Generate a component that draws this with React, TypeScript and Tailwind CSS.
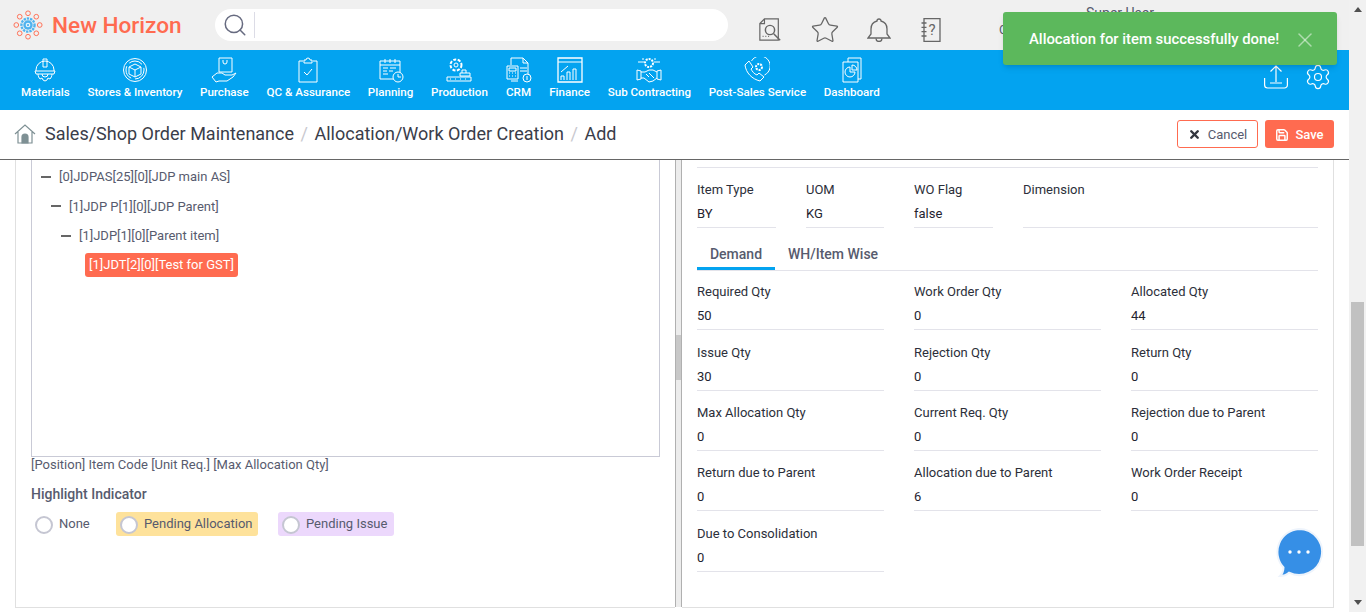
import { Star, Search, X, Save, Settings } from 'lucide-react'

const menu = [
  { label: 'Materials', icon: 'helmet' },
  { label: 'Stores & Inventory', icon: 'box' },
  { label: 'Purchase', icon: 'purchase' },
  { label: 'QC & Assurance', icon: 'qc' },
  { label: 'Planning', icon: 'plan' },
  { label: 'Production', icon: 'prod' },
  { label: 'CRM', icon: 'crm' },
  { label: 'Finance', icon: 'finance' },
  { label: 'Sub Contracting', icon: 'sub' },
  { label: 'Post-Sales Service', icon: 'post' },
  { label: 'Dashboard', icon: 'dash' },
]

function MenuIcon({ name }: { name: string }) {
  const p = { fill: 'none', stroke: 'white', strokeWidth: 1 }
  return (
    <svg width="26" height="26" viewBox="0 0 26 26" {...p}>
      {name === 'helmet' && (
        <>
          <path d="M4 13a9 9 0 0 1 18 0v1M4 13v1" />
          <path d="M3 14h20l-1 3H4z" />
          <path d="M11 2h4v8h-4z" />
          <path d="M6 17c0 2 1 4 2 5l2-1 1 2 2 1 2-1 1-2 2 1c1-1 2-3 2-5M10 17a3 3 0 0 0 6 0" />
        </>
      )}
      {name === 'box' && (
        <>
          <circle cx="13" cy="13" r="11.5" />
          <circle cx="13" cy="13" r="9" strokeDasharray="14 4" />
          <path d="M7 10l6-3 6 3v7l-6 3-6-3zM7 10l6 3 6-3M13 13v7" />
        </>
      )}
      {name === 'purchase' && (
        <>
          <path d="M8 1h13v14H8zM12 3v2a2 2 0 0 0 4 0V3" />
          <path d="M1 20l5-4h5l3 2h7l4-2-3 4-6 4H8l-3 1z" />
        </>
      )}
      {name === 'qc' && (
        <>
          <path d="M8 4H4v21h18V4h-4M9 6V3h2a2 2 0 0 1 4 0h2v3z" />
          <path d="M9 15l3 3 5-6" />
        </>
      )}
      {name === 'plan' && (
        <>
          <path d="M2 4h20v18H2zM2 8h20M7 2v4M12 2v4M17 2v4M5 11h5M12 11h6M5 14h4M11 14h4M5 17h5" />
          <circle cx="20" cy="20" r="5" fill="#03a3f0" />
          <path d="M20 17v3h3" />
        </>
      )}
      {name === 'prod' && (
        <>
          <circle cx="10" cy="8" r="5.5" strokeDasharray="3 1.500" strokeWidth="2" />
          <circle cx="10" cy="8" r="2" />
          <path d="M16 16v-3h4v3M14 16h10v3H14zM1 20h24v4H1z" />
          <path d="M4 22h1M9 22h1M14 22h1M19 22h1" />
        </>
      )}
      {name === 'crm' && (
        <>
          <path d="M5 8V1h12l5 5v13h-4M17 1v5h5M12 24H5" />
          <path d="M1 9h11v13H1zM3 11h7v3H3zM3 16h1M6 16h1M9 16h1M3 19h1M6 19h1M9 19h1M14 11h7M14 14h7" />
          <circle cx="21" cy="21" r="4" fill="#03a3f0" />
          <path d="M21 19v4" />
        </>
      )}
      {name === 'finance' && (
        <>
          <path d="M1 1h24v24H1z" strokeWidth="1.300" />
          <path d="M1 5h24" />
          <path d="M4 23v-4h3v4M10 23v-8h3v8M16 23v-11h3v11M4 15l7-6" />
        </>
      )}
      {name === 'sub' && (
        <>
          <circle cx="13" cy="6" r="4" strokeDasharray="2 1" strokeWidth="2" />
          <path d="M2 5h6M18 5h6M6 2h2M18 2h2" />
          <path d="M1 13l4 1v8l-4 1zM25 13l-4 1v8l4 1z" />
          <path d="M5 15h4l4-2h4l4 2M5 21h3l5 4 4-1 4-3M10 17l3 3M13 16l5 5" />
        </>
      )}
      {name === 'post' && (
        <>
          <path d="M7.500 4a10 10 0 1 1 13 14" />
          <path d="M5 4L1 8c1 8 7 14 15 16l4-4-5-4-2 2c-3-1-5-4-6-6l2-2z" />
          <circle cx="15" cy="10" r="3" strokeDasharray="2 1" strokeWidth="2" />
        </>
      )}
      {name === 'dash' && (
        <>
          <path d="M9 5V1h13v21h-3M4 5h15v20H4z" />
          <path d="M11 10a5 5 0 1 0 5 5h-5zM13 8v5h5a5 5 0 0 0-5-5z" />
        </>
      )}
    </svg>
  )
}

function Logo() {
  const dots = [0, 45, 90, 135, 180, 225, 270, 315]
  return (
    <svg width="30" height="30" viewBox="0 0 32 32">
      {dots.map((a) => (
        <circle
          key={a}
          cx={16 + 12.5 * Math.cos((a * Math.PI) / 180)}
          cy={16 + 12.5 * Math.sin((a * Math.PI) / 180)}
          r="2.500"
          fill="#f0f0f0"
          stroke="#ff6b50"
          strokeWidth="1"
        />
      ))}
      <circle cx="16" cy="16" r="7" fill="none" stroke="#4fb3ef" strokeWidth="2.500" strokeDasharray="2.500 1" />
      <circle cx="16" cy="16" r="5" fill="#4fb3ef" />
      <circle cx="16" cy="16" r="2.500" fill="#e8f4fc" />
      <circle cx="16" cy="16" r="1.200" fill="#4fb3ef" />
    </svg>
  )
}

function Field({ label, value }: { label: string; value?: string }) {
  return (
    <div>
      <div className="h-[24px] text-[13px] leading-[26px] text-[#2c2f3a]">{label}</div>
      <div className="h-[27px] border-b border-[#e3e3ea] text-[13px] leading-[26px] text-[#1f2430]">{value}</div>
    </div>
  )
}

const qtyFields = [
  ['Required Qty', '50'],
  ['Work Order Qty', '0'],
  ['Allocated Qty', '44'],
  ['Issue Qty', '30'],
  ['Rejection Qty', '0'],
  ['Return Qty', '0'],
  ['Max Allocation Qty', '0'],
  ['Current Req. Qty', '0'],
  ['Rejection due to Parent', '0'],
  ['Return due to Parent', '0'],
  ['Allocation due to Parent', '6'],
  ['Work Order Receipt', '0'],
  ['Due to Consolidation', '0'],
]

function Radio({ label, className }: { label: string; className: string }) {
  return (
    <div className={`flex h-[24px] items-center gap-[6px] rounded-[3px] pl-[4px] ${className}`}>
      <span className="mt-[2px] h-[18px] w-[18px] shrink-0 rounded-full border-2 border-[#c5c6d2] bg-white" />
      <span className="text-[13px] text-[#575b6e]">{label}</span>
    </div>
  )
}

export default function App() {
  return (
    <div className="relative flex h-[612px] w-[1366px] overflow-hidden bg-white font-['Roboto',sans-serif]">
      <div className="flex w-[1349px] flex-col">
        <header className="flex h-[50px] items-center bg-[#f0f0f0]">
          <div className="ml-[13px] flex w-[202px] items-center gap-[9px]">
            <Logo />
            <span className="mt-[2px] text-[22.6px] font-medium text-[#ff6b50]">New Horizon</span>
          </div>
          <div className="flex h-[32px] w-[513px] items-center rounded-full bg-white pl-[7px]">
            <Search size={26} strokeWidth={1.4} className="text-[#676b80]" />
            <span className="ml-[6px] h-[26px] w-px bg-[#dcdce6]" />
          </div>
          <div className="ml-[30px] mt-[10px] flex items-center text-[#666666]">
            <svg width="24" height="24" viewBox="0 0 26 26" fill="none" stroke="#666" strokeWidth="1.300">
              <path d="M7 1h15v23H2V6zM7 1v5H2" />
              <circle cx="13" cy="13" r="5" fill="#f0f0f0" strokeWidth="1.600" />
              <path d="M17 17l7 7" strokeWidth="1.600" />
              <path d="M5 20h1M8 20h1M11 20h1" />
            </svg>
            <Star size={30} strokeWidth={1} className="ml-[28px]" />
            <svg className="ml-[27px]" width="24" height="24" viewBox="0 0 24 24" fill="none" stroke="#666" strokeWidth="1.300">
              <path d="M12 1c-1.200 0-2 .8-2 2-4 1-6 4.500-6 8v5l-3 4h22l-3-4v-5c0-3.500-2-7-6-8 0-1.200-.8-2-2-2z" />
              <path d="M9 20.500a3 3 0 0 0 6 0" />
            </svg>
            <svg className="ml-[30px]" width="20" height="24" viewBox="0 0 20 24" fill="none" stroke="#666" strokeWidth="1.300">
              <path d="M3 .7h16v22.600H3zM.5 5h5M.5 9.300h5M.5 13.700h5M.5 18h5" />
              <text x="11" y="17" fontSize="15" textAnchor="middle" fill="#666" stroke="none">?</text>
            </svg>
          </div>
          <span className="absolute left-[999px] top-[21px] text-[12.5px] text-[#575b6e]">C</span>
          <span className="absolute left-[1086px] top-[3px] text-[14px] text-[#575b6e]">Super User</span>
        </header>

        <nav className="flex h-[60px] items-start justify-between bg-[#03a3f0] pl-[21px] pr-[17px] pt-[7px]">
          <div className="flex gap-[17.7px]">
            {menu.map((m) => (
              <div key={m.label} className="flex flex-col items-center">
                <MenuIcon name={m.icon} />
                <span className="mt-[1px] whitespace-nowrap text-[11.6px] font-medium leading-[16px] text-white">{m.label}</span>
              </div>
            ))}
          </div>
          <div className="mt-[6px] flex items-center gap-[16px] text-white">
            <svg width="24" height="24" viewBox="0 0 24 24" fill="none" stroke="white" strokeWidth="1.200">
              <path d="M12 17V1M6.500 6.500L12 1l5.500 5.500M.6 13v7a3 3 0 0 0 3 3h16.800a3 3 0 0 0 3-3v-7M6 18h12" />
            </svg>
            <Settings size={28} strokeWidth={1} />
          </div>
        </nav>

        <div className="flex h-[50px] items-center justify-between border-b border-[#666] pb-[2px] pl-[14px] pr-[15px]">
          <div className="flex items-center text-[18px] text-[#3a3d4a]">
            <svg width="22" height="22" viewBox="0 0 22 22" fill="none" stroke="#7e9094" strokeWidth="1.200">
              <path d="M1 11L11 2l10 9M4 9v11h14V9" />
              <path d="M8 20v-6a3 3 0 0 1 6 0v6z" fill="#7e9094" />
            </svg>
            <span className="ml-[9px]">Sales/Shop Order Maintenance</span>
            <span className="mx-[6.5px] text-[#c9c9cf]">/</span>
            <span>Allocation/Work Order Creation</span>
            <span className="mx-[6.5px] text-[#c9c9cf]">/</span>
            <span>Add</span>
          </div>
          <div className="flex items-center gap-[7px]">
            <button className="flex h-[28px] w-[81px] items-center justify-center gap-[7px] rounded-[3px] border border-[#ff6b50] bg-white pt-[2px] text-[13px] text-[#575b6e]">
              <X size={13} strokeWidth={4.5} className="text-[#33363f]" />
              Cancel
            </button>
            <button className="flex h-[28px] w-[69px] items-center justify-center gap-[6px] rounded-[3px] bg-[#ff6b50] pt-[2px] text-[13px] font-medium text-white">
              <Save size={14} strokeWidth={2.5} />
              Save
            </button>
          </div>
        </div>

        <div className="flex flex-1 overflow-hidden pl-[15px]">
          <section className="mb-[4px] w-[660px] border-b border-l border-[#e0e0e0] pl-[15px] pr-[15px]">
            <div className="h-[297px] border-b border-l border-r border-[#c9cad6] pl-[9px] pt-[2px] text-[13px] text-[#575b6e]">
              <div className="flex h-[29.500px] items-center">
                <span className="mr-[8px] h-[2px] w-[10px] bg-[#666]" />
                [0]JDPAS[25][0][JDP main AS]
              </div>
              <div className="flex h-[29.500px] items-center pl-[10px]">
                <span className="mr-[8px] h-[2px] w-[10px] bg-[#666]" />
                [1]JDP P[1][0][JDP Parent]
              </div>
              <div className="flex h-[29.500px] items-center pl-[20px]">
                <span className="mr-[8px] h-[2px] w-[10px] bg-[#666]" />
                [1]JDP[1][0][Parent item]
              </div>
              <div className="ml-[44px] mt-[2.500px] flex h-[24px] w-[153px] items-center justify-center rounded-[3px] bg-[#ff6b50] text-white">
                [1]JDT[2][0][Test for GST]
              </div>
            </div>
            <div className="text-[13px] leading-[16px] text-[#575b6e]">[Position] Item Code [Unit Req.] [Max Allocation Qty]</div>
            <div className="mt-[12px] text-[14px] font-medium leading-[18px] text-[#575b6e]">Highlight Indicator</div>
            <div className="mt-[9px] flex gap-[20px]">
              <Radio label="None" className="w-[65px]" />
              <Radio label="Pending Allocation" className="w-[142px] bg-[#fee29b]" />
              <Radio label="Pending Issue" className="w-[116px] bg-[#ecd8fc]" />
            </div>
          </section>

          <div className="relative mb-[5px] w-[7px] border-x border-[#b0b0b0] bg-[#ececec]">
            <div className="absolute left-0 top-[175px] h-[45px] w-[5px] bg-[#c8c8c8]" />
          </div>

          <section className="mb-[4px] w-[652px] border-b border-r border-[#e0e0e0] pl-[15px] pr-[15px]">
            <div className="h-[8px] border-b border-[#e3e3ea]" />
            <div className="mt-[9px] grid grid-cols-[79px_78px_79px_295px] gap-x-[30px]">
              <Field label="Item Type" value="BY" />
              <Field label="UOM" value="KG" />
              <Field label="WO Flag" value="false" />
              <Field label="Dimension" />
            </div>
            <div className="mt-[12px] flex h-[31px] border-b border-[#e3e3ea] text-[14px] font-medium text-[#575b6e]">
              <div className="flex h-[30px] w-[78px] items-center justify-center border-b-[3px] border-[#03a3f0] pt-[2px]">Demand</div>
              <div className="ml-[13px] flex h-[27px] items-center pt-[2px]">WH/Item Wise</div>
            </div>
            <div className="mt-[8.2px] grid grid-cols-[187px_187px_187px] gap-x-[30px] gap-y-[9.4px]">
              {qtyFields.map(([label, value]) => (
                <Field key={label} label={label} value={value} />
              ))}
            </div>
          </section>
        </div>
      </div>

      <aside className="relative w-[17px] bg-[#f1f1f1]">
        <div className="absolute left-[5px] top-[7px] h-0 w-0 border-x-[4px] border-b-[5px] border-x-transparent border-b-[#505050]" />
        <div className="absolute left-0 top-[302px] h-[244px] w-[17px] pl-[2px] pr-[2px]">
          <div className="h-full bg-[#c1c1c1]" />
        </div>
        <div className="absolute bottom-[7px] left-[5px] h-0 w-0 border-x-[4px] border-t-[5px] border-x-transparent border-t-[#505050]" />
      </aside>

      <div className="absolute left-[1003px] top-[12px] flex h-[53px] w-[334px] items-center rounded-[3px] bg-[#5cb85c] pl-[26px] shadow-md">
        <span className="pt-[2px] text-[14.85px] font-medium text-white">Allocation for item successfully done!</span>
        <X size={24} strokeWidth={1.5} className="ml-[14px] mt-[3px] text-white/50" />
      </div>

      <div className="absolute left-[1275px] top-[528px]">
        <svg width="48" height="50" viewBox="0 0 48 50">
          <path d="M24 1a23 23 0 1 1-10 43.700c-2 1.800-5 3.300-9 3.300 2-2 3.500-5 3.500-8.500A23 23 0 0 1 24 1z" fill="#368fe6" stroke="#eef4fc" strokeWidth="2" />
          <circle cx="15" cy="24" r="1.700" fill="white" />
          <circle cx="24" cy="24" r="1.700" fill="white" />
          <circle cx="33" cy="24" r="1.700" fill="white" />
        </svg>
      </div>
    </div>
  )
}
